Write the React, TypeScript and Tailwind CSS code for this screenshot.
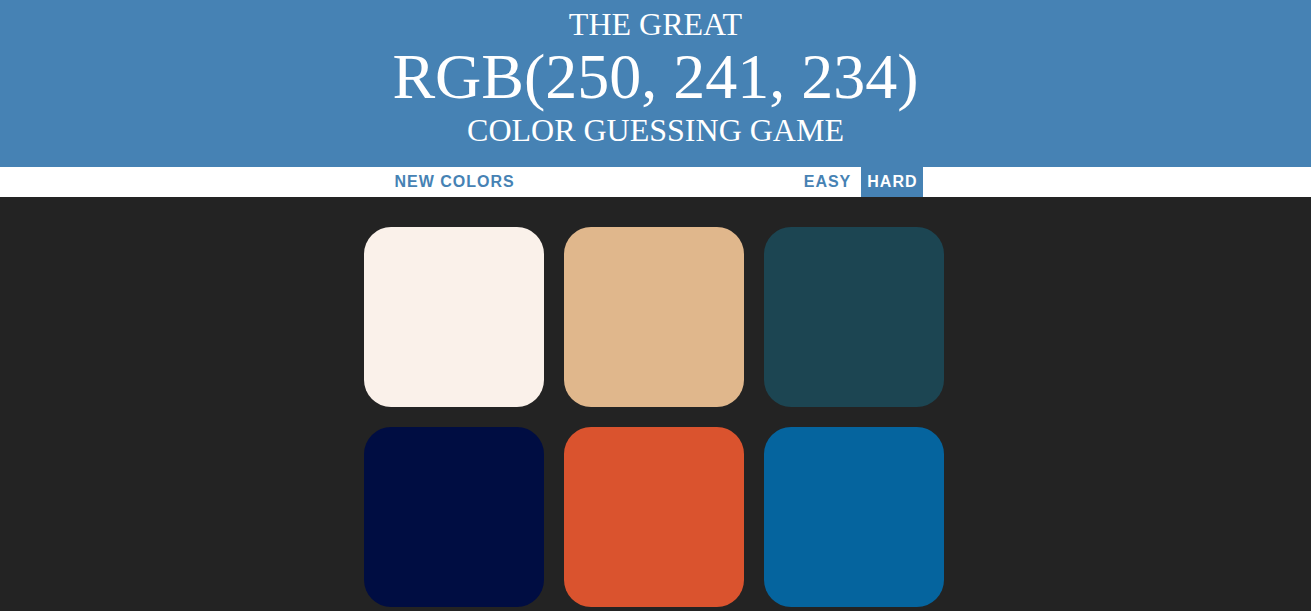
const colors = [
	'rgb(250, 241, 234)',
	'rgb(224, 183, 140)',
	'rgb(28, 69, 82)',
	'rgb(0, 13, 66)',
	'rgb(218, 83, 46)',
	'rgb(5, 100, 158)',
];

export default function App() {
	return (
		<div className="min-h-screen bg-[#232323]">
			<h1
				className="bg-[#4682b4] text-white text-center uppercase font-normal leading-[1.1] pt-[7px] pb-[19px] text-[32px]"
				style={{ fontFamily: '"Liberation Serif", "Times New Roman", serif' }}
			>
				The Great
				<span className="block text-[64px] leading-[1.1]">RGB(250, 241, 234)</span>
				Color Guessing Game
			</h1>

			<div
				className="bg-white h-[30px] flex justify-center items-stretch text-[16px] font-bold tracking-[1px] text-[#4682b4]"
				style={{ fontFamily: '"Liberation Sans", Arial, sans-serif' }}
			>
				<button className="px-[6px] uppercase">New Colors</button>
				<span className="w-[277px]"></span>
				<button className="px-[6px] uppercase">Easy</button>
				<button className="pl-[6px] pr-[5px] ml-[4px] uppercase bg-[#4682b4] text-white">Hard</button>
			</div>

			<div className="w-[600px] mx-auto mt-[30px] px-[8px] grid grid-cols-[repeat(3,180px)] gap-[20px]">
				{colors.map((c, i) => (
					<div
						key={i}
						className="w-[180px] h-[180px] rounded-[27px]"
						style={{ backgroundColor: c }}
					/>
				))}
			</div>
		</div>
	);
}
